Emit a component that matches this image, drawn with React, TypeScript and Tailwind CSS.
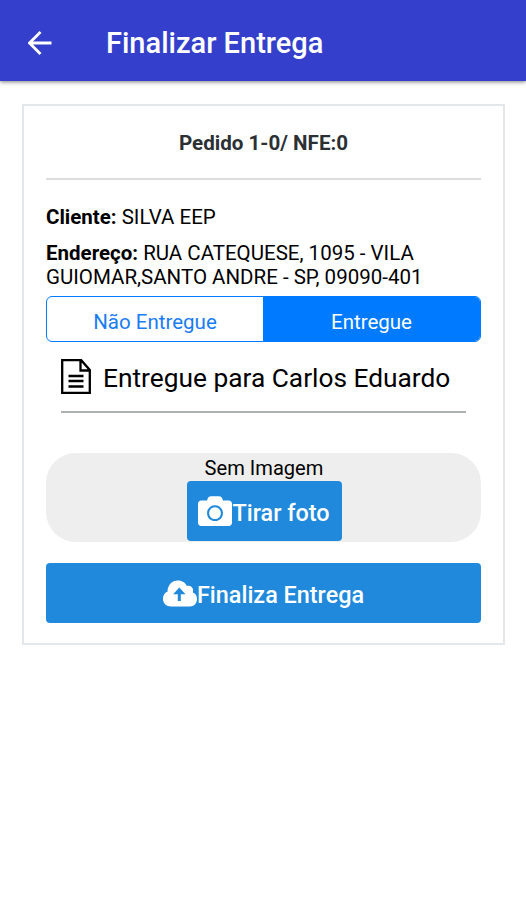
import type { ReactNode } from "react";
import { FaCamera } from "react-icons/fa";

const order = {
  title: "Pedido 1-0/ NFE:0",
  client: "SILVA EEP",
  address: "RUA CATEQUESE, 1095 - VILA GUIOMAR,SANTO ANDRE - SP, 09090-401",
  receiver: "Entregue para Carlos Eduardo",
};

export default function App() {
  return (
    <div className="min-h-screen bg-white font-['Roboto',sans-serif] text-black">
      <Header title="Finalizar Entrega" />

      <main className="mt-[23px] mr-[21px] ml-[22px] h-[541px] border-2 border-[#e4e7e9] px-[22px]">
        <h2 className="flex h-[74px] items-center justify-center border-b-2 border-[#dcdddf] pt-0.5 text-[20.6px] font-bold text-[#2b3035]">
          {order.title}
        </h2>

        <div className="h-[116px] pt-[25px] text-[20.5px] leading-6">
          <Field label="Cliente" value={order.client} />
          <div className="h-3" />
          <Field label="Endereço" value={order.address} />
        </div>

        <div className="flex h-[46px] overflow-hidden rounded-md border border-[#007aff] text-[20.5px]">
          <button className="w-[216px] pt-1.5 text-[#1a7cf5]">Não Entregue</button>
          <button className="flex-1 bg-[#007aff] pt-1.5 text-white">Entregue</button>
        </div>

        <div className="mx-[15px] flex h-[71px] items-center border-b-2 border-[#adb1b2]">
          <DocumentIcon />
          <span className="ml-3 pt-1 whitespace-nowrap text-[26.3px]">{order.receiver}</span>
        </div>

        <section className="mt-10 flex h-[89px] flex-col items-center rounded-[30px] bg-[#eeeeee]">
          <p className="h-7 pl-px text-[20.1px] leading-[30px]">Sem Imagem</p>
          <ActionButton className="ml-px w-[155px]">
            <FaCamera className="mb-1.5 h-[34px] w-[34px]" />
            <span>Tirar foto</span>
          </ActionButton>
        </section>

        <ActionButton className="mt-[21px] w-full">
          <CloudUploadIcon />
          <span>Finaliza Entrega</span>
        </ActionButton>
      </main>
    </div>
  );
}

function Header({ title }: { title: string }) {
  return (
    <header className="flex h-[81px] items-center bg-[#343fcb] pt-1 pl-7 text-white shadow-[0_1px_4px_rgba(0,0,0,0.5)]">
      <svg viewBox="0 0 24 24" className="h-6 w-6" fill="none" stroke="currentColor" strokeWidth="2.8">
        <path d="M23.500 12H2M12.500 1 1.500 12l11 11" />
      </svg>
      <h1 className="ml-[54px] pt-0.5 text-[29px] font-medium">{title}</h1>
    </header>
  );
}

function Field({ label, value }: { label: string; value: string }) {
  return (
    <p>
      <strong className="font-bold">{`${label}:`}</strong>
      {` ${value}`}
    </p>
  );
}

function ActionButton({ className, children }: { className: string; children: ReactNode }) {
  return (
    <button
      className={`flex h-[60px] shrink-0 items-center justify-center rounded bg-[#2089dc] pt-1.5 text-[23.4px] font-medium whitespace-nowrap text-white ${className}`}
    >
      {children}
    </button>
  );
}

function DocumentIcon() {
  return (
    <svg viewBox="0 0 30 35" className="h-[35px] w-[30px] shrink-0" fill="none" stroke="currentColor" strokeWidth="2.3">
      <path d="M1.200 1.200h19l8.600 9.800v22.800H1.200ZM19.500 1v10.500H29M7.500 17h15M7.500 22h15M7.500 27.500h15" />
    </svg>
  );
}

function CloudUploadIcon() {
  return (
    <svg viewBox="0 0 34 27" className="mb-1.5 h-[27px] w-[34px] shrink-0">
      <path
        fill="currentColor"
        d="M8 26.500C3.500 26.500 0 23.500 0 19c0-4 2.300-6.500 4.500-7.200C4.500 5 9 .5 15 .5c4.200 0 7.300 2.300 8.800 5.500 4-1.500 7.400 2 6 6.500 2.700.8 4.200 3.200 4.200 6.500 0 4.500-3 7.500-7 7.500Z"
      />
      <path fill="#2089dc" d="m16.300 7.500 6.200 6.800h-4.700V21h-3v-6.700h-4.700Z" />
    </svg>
  );
}
